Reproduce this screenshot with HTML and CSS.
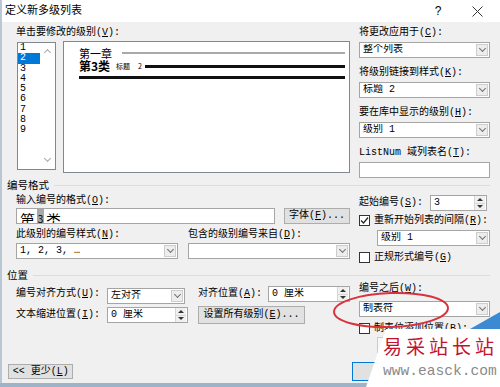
FILE: index.html
```html
<!DOCTYPE html>
<html lang="zh-CN">
<head>
    <meta charset="UTF-8">
    <title>定义新多级列表</title>
    <link rel="stylesheet" href="styles.css">
</head>
<body>
    <div class="dialog">
        <!-- 标题栏 -->
        <div class="titlebar">
            <span class="title">定义新多级列表</span>
            <span class="help">?</span>
            <span class="close"><svg width="11" height="11" viewBox="0 0 11 11"><path d="M0.5 0.5L10.5 10.5M10.5 0.5L0.5 10.5" stroke="#333" stroke-width="1"/></svg></span>
        </div>

        <div class="main">
            <!-- 级别 + 预览 -->
            <div class="sec top">
                <div class="col-left">
                    <div class="lbl">单击要修改的级别(<u>V</u>):</div>
                    <div class="levels-row">
                        <div class="levels">
                            <ul>
                                <li>1</li>
                                <li class="sel">2</li>
                                <li>3</li>
                                <li>4</li>
                                <li>5</li>
                                <li>6</li>
                                <li>7</li>
                                <li>8</li>
                                <li>9</li>
                            </ul>
                            <div class="vscroll"><i class="up"></i><i class="down"></i></div>
                        </div>
                        <div class="preview">
                            <div class="pv-row r1"><span>第一章</span><b class="ln gray"></b></div>
                            <div class="pv-row r2"><span class="bold">第3类</span><span class="tiny">标题</span><span class="tiny n">2</span><b class="ln black"></b></div>
                            <b class="ln black full"></b>
                            <div class="pv-lines">
                                <b class="ln gray"></b>
                                <b class="ln gray"></b>
                                <b class="ln gray"></b>
                                <b class="ln gray"></b>
                                <b class="ln gray"></b>
                                <b class="ln gray"></b>
                                <b class="ln gray"></b>
                            </div>
                        </div>
                    </div>
                </div>
                <div class="side">
                    <div class="lbl">将更改应用于(<u>C</u>):</div>
                    <div class="combo"><span class="val">整个列表</span><span class="dd"></span></div>
                    <div class="lbl gap">将级别链接到样式(<u>K</u>):</div>
                    <div class="combo"><span class="val">标题 2</span><span class="dd"></span></div>
                    <div class="lbl gap">要在库中显示的级别(<u>H</u>):</div>
                    <div class="combo"><span class="val">级别 1</span><span class="dd"></span></div>
                    <div class="lbl gap">ListNum 域列表名(<u>T</u>):</div>
                    <div class="field"></div>
                </div>
            </div>

            <!-- 编号格式 -->
            <div class="grp">编号格式</div>
            <div class="sec fmt">
                <div class="col-left">
                    <div class="lbl">输入编号的格式(<u>O</u>):</div>
                    <div class="row r-fmt">
                        <div class="field fmtin"><span>第</span><span class="fld">3</span><span>类</span>.</div>
                        <div class="btn font-btn">字体(<u>F</u>)...</div>
                    </div>
                    <div class="row r-lbls">
                        <span class="lbl w172">此级别的编号样式(<u>N</u>):</span>
                        <span class="lbl">包含的级别编号来自(<u>D</u>):</span>
                    </div>
                    <div class="row r-sel">
                        <div class="combo w162"><span class="val">1, 2, 3, …</span><span class="dd"></span></div>
                        <div class="combo w162 ml10"><span class="val"></span><span class="dd"></span></div>
                    </div>
                </div>
                <div class="side">
                    <div class="row r-start">
                        <span class="lbl w71">起始编号(<u>S</u>):</span>
                        <div class="spin w57"><span class="val">3</span><span class="ud"><i class="u"></i><i class="d"></i></span></div>
                    </div>
                    <div class="chk r-restart">
                        <span class="cb"><svg width="9" height="9" viewBox="0 0 9 9"><path d="M1 4.5L3.5 7L8 1.5" fill="none" stroke="#222" stroke-width="1.2"/></svg></span>
                        <span class="lbl">重新开始列表的间隔(<u>R</u>):</span>
                    </div>
                    <div class="combo sub"><span class="val">级别 1</span><span class="dd"></span></div>
                    <div class="chk r-legal">
                        <span class="cb"></span>
                        <span class="lbl">正规形式编号(<u>G</u>)</span>
                    </div>
                </div>
            </div>

            <!-- 位置 -->
            <div class="grp pos-grp">位置</div>
            <div class="sec pos">
                <div class="col-left">
                    <div class="row pr1">
                        <span class="lbl w91">编号对齐方式(<u>U</u>):</span>
                        <div class="combo w78"><span class="val">左对齐</span><span class="dd"></span></div>
                        <span class="lbl w70 ml13">对齐位置(<u>A</u>):</span>
                        <div class="spin w82"><span class="val">0 厘米</span><span class="ud"><i class="u"></i><i class="d"></i></span></div>
                    </div>
                    <div class="row pr2">
                        <span class="lbl w91">文本缩进位置(<u>I</u>):</span>
                        <div class="spin w81"><span class="val">0 厘米</span><span class="ud"><i class="u"></i><i class="d"></i></span></div>
                        <div class="btn all-btn">设置所有级别(<u>E</u>)...</div>
                    </div>
                </div>
                <div class="side">
                    <div class="lbl after-lbl">编号之后(<u>W</u>):</div>
                    <div class="combo after-sel"><span class="val">制表符</span><span class="dd"></span></div>
                    <div class="chk r-tab">
                        <span class="cb"></span>
                        <span class="lbl">制表位添加位置(<u>B</u>):</span>
                    </div>
                    <div class="field sub dis"></div>
                </div>
            </div>

            <!-- 底部按钮（确定、取消被水印盖住） -->
            <div class="footer">
                <div class="btn less-btn">&lt;&lt; 更少(<u>L</u>)</div>
                <div class="btn ok-btn"></div>
                <div class="btn cancel-btn"></div>
            </div>
        </div>
    </div>

    <!-- 红圈标注 -->
    <svg class="mark" width="124" height="44" viewBox="0 0 124 44">
        <ellipse cx="62" cy="21" rx="57" ry="17" fill="none" stroke="#d8333c" stroke-width="2" transform="rotate(-2 62 21)"/>
    </svg>

    <!-- 水印 -->
    <div class="wm-tri"></div>
    <div class="wm">
        <div class="wm-cn">易采站长站</div>
        <div class="wm-en">www.easck.com</div>
    </div>
</body>
</html>
```

FILE: styles.css
```css
*{
    margin: 0;
    padding: 0;
    box-sizing: border-box;
}
body{
    width: 500px;
    height: 387px;
    position: relative;
    overflow: hidden;
    background-color: #9fb3c8;
    font-family: "Liberation Mono", "Noto Sans CJK SC", monospace;
    font-size: 10px;
    line-height: 12px;
    color: #000;
}
u{
    text-underline-offset: 1px;
}

/* 对话框 */
.dialog{
    width: 500px;
    height: 383px;
    background-color: #f0f0f0;
    border-left: 2px solid #b9c6d3;
}
.titlebar{
    height: 22px;
    background-color: #fff;
    display: flex;
    align-items: center;
    padding-left: 3px;
}
.title{
    flex: 1;
    font-size: 11px;
}
.help{
    width: 10px;
    text-align: center;
    font-family: "Liberation Sans", sans-serif;
    font-size: 12px;
}
.close{
    display: flex;
    margin-left: 29px;
    margin-right: 17px;
}

.main{
    padding: 0 10px 0 14px;
}
.sec{
    display: flex;
}
.col-left{
    width: 334px;
}
.side{
    width: 131px;
    margin-left: 9px;
}
.row{
    display: flex;
    align-items: center;
}
.lbl{
    display: block;
    height: 12px;
    line-height: 12px;
    white-space: nowrap;
}

/* 顶部 */
.top{
    margin-top: 5px;
}
.levels-row{
    display: flex;
    margin-top: 2px;
}
.levels{
    width: 39px;
    height: 128px;
    margin: 1px 0 0 1px;
    border: 1px solid #828790;
    background-color: #fff;
    display: flex;
}
.levels ul{
    list-style: none;
    width: 22px;
}
.levels li{
    height: 10.25px;
    line-height: 10.25px;
    padding-left: 2px;
    font-size: 10px;
}
.levels li.sel{
    background-color: #0078d7;
    color: #fff;
}
.vscroll{
    flex: 1;
    display: flex;
    flex-direction: column;
    justify-content: space-between;
    align-items: center;
    padding: 7px 0 8px;
}
.vscroll i{
    width: 5px;
    height: 5px;
    border-left: 1px solid #a8a8a8;
    border-top: 1px solid #a8a8a8;
    transform: rotate(45deg);
}
.vscroll i.down{
    transform: rotate(225deg);
}

/* 预览 */
.preview{
    width: 287px;
    height: 132px;
    margin-left: 7px;
    border: 1px solid #828790;
    background-color: #fff;
    padding: 5px 4px 0 15px;
    font-family: "Noto Sans CJK SC", sans-serif;
}
.pv-row{
    display: flex;
    align-items: center;
}
.pv-row.r1{
    height: 12px;
    font-size: 11px;
}
.pv-row.r1 .ln{
    margin-left: 10px;
}
.pv-row.r2{
    height: 14px;
}
.bold{
    font-weight: bold;
    font-size: 12px;
}
.tiny{
    font-size: 7px;
    margin-left: 6px;
}
.tiny.n{
    margin-left: 8px;
}
.pv-row.r2 .ln{
    margin-left: 3px;
}
.ln{
    display: block;
    flex: 1;
}
.ln.gray{
    height: 2px;
    background-color: #a9a9a9;
}
.ln.black{
    height: 3px;
    background-color: #111;
}
.ln.full{
    margin-top: 3px;
}
.pv-lines{
    margin: 8px 0 0 8px;
    display: flex;
    flex-direction: column;
    gap: 9.33px;
}

/* 下拉框、输入框 */
.combo,
.field,
.spin{
    height: 16px;
    border: 1px solid #a5a5a5;
    background-color: #fff;
    display: flex;
    align-items: center;
}
.lbl + .combo,
.lbl + .field{
    margin-top: 3px;
}
.lbl.gap{
    margin-top: 9px;
}
.combo .val,
.spin .val{
    flex: 1;
    padding-left: 3px;
    white-space: nowrap;
    overflow: hidden;
}
.combo .dd{
    width: 12px;
    height: 12px;
    margin-right: 1px;
    border: 1px solid #cdcdcd;
    background-color: #ededed;
    display: flex;
    justify-content: center;
    align-items: center;
}
.combo .dd::after{
    content: "";
    width: 4px;
    height: 4px;
    margin-top: -3px;
    border-right: 1px solid #707070;
    border-bottom: 1px solid #707070;
    transform: rotate(45deg);
}
.spin .ud{
    width: 11px;
    height: 14px;
    margin-right: 1px;
    display: flex;
    flex-direction: column;
    background-color: #f0f0f0;
    border-left: 1px solid #d6d6d6;
}
.spin .ud i{
    flex: 1;
    display: flex;
    justify-content: center;
    align-items: center;
}
.spin .ud i.u{
    border-bottom: 1px solid #d6d6d6;
}
.spin .ud i.u::after{
    content: "";
    border-left: 3px solid transparent;
    border-right: 3px solid transparent;
    border-bottom: 3px solid #333;
}
.spin .ud i.d::after{
    content: "";
    border-left: 3px solid transparent;
    border-right: 3px solid transparent;
    border-top: 3px solid #333;
}
.field.dis{
    border-color: #cccccc;
    background-color: #f7f7f7;
}

/* 按钮 */
.btn{
    height: 16px;
    border: 1px solid #adadad;
    background-color: #e1e1e1;
    display: flex;
    align-items: center;
    justify-content: center;
    white-space: nowrap;
}

/* 复选框 */
.chk{
    display: flex;
    align-items: center;
    height: 13px;
}
.cb{
    width: 11px;
    height: 11px;
    border: 1px solid #333;
    background-color: #fff;
    margin-right: 4px;
    display: flex;
    align-items: center;
    justify-content: center;
}

/* 分组标题 */
.grp{
    display: flex;
    align-items: center;
    height: 12px;
    margin: 1px 0 0 -9px;
    font-family: "Noto Sans CJK SC", sans-serif;
    font-size: 10.5px;
}
.grp::after{
    content: "";
    flex: 1;
    height: 1px;
    margin-left: 5px;
    background-color: #dcdcdc;
}
.pos-grp{
    margin-top: 5px;
}

/* 编号格式 */
.fmt .col-left > .lbl{
    margin-top: 4px;
}
.r-fmt{
    margin-top: 1px;
}
.fmtin{
    width: 259px;
    overflow: hidden;
    align-items: flex-start;
    padding: 3px 0 0 3px;
    font-family: "Noto Sans CJK SC", sans-serif;
    font-size: 15px;
    line-height: 15px;
}
.fld{
    display: inline-block;
    width: 7px;
    height: 16px;
    margin: -4px 2px 0;
    background-color: #a8a8a8;
    font-size: 10px;
    line-height: 22px;
    text-align: center;
}
.font-btn{
    width: 66px;
    margin-left: 9px;
}
.r-lbls{
    margin-top: 5px;
}
.w172{
    width: 172px;
}
.r-sel{
    margin-top: 2px;
}
.w162{
    width: 162px;
}
.ml10{
    margin-left: 10px;
}
.r-start{
    margin-top: 4px;
}
.w71{
    width: 71px;
}
.w57{
    width: 57px;
}
.r-restart{
    margin-top: 3px;
}
.sub{
    width: 113px;
    margin-left: 18px;
}
.fmt .combo.sub{
    margin-top: 3px;
}
.r-legal{
    margin-top: 5px;
}

/* 位置 */
.pr1{
    height: 16px;
    margin-top: 5px;
}
.pr2{
    height: 18px;
    margin-top: 4px;
}
.w91{
    width: 91px;
}
.w78{
    width: 78px;
}
.w70{
    width: 70px;
}
.ml13{
    margin-left: 13px;
}
.w82{
    width: 82px;
}
.w81{
    width: 81px;
}
.all-btn{
    width: 107px;
    height: 18px;
    margin-left: 10px;
}
.after-lbl{
    margin-top: 2px;
}
.after-sel{
    margin-top: 6px !important;
}
.r-tab{
    margin-top: 5px;
}
.field.sub{
    margin-top: 2px;
}

/* 底部 */
.footer{
    display: flex;
    align-items: center;
    margin: 9px 0 0 -8px;
}
.less-btn{
    width: 66px;
    height: 15px;
}
.ok-btn{
    width: 70px;
    height: 19px;
    margin-left: 279px;
    border: 1px solid #0078d7;
}
.cancel-btn{
    width: 62px;
    height: 19px;
    margin-left: 7px;
}

/* 标注和水印 */
.mark{
    position: absolute;
    left: 329px;
    top: 289px;
}
.wm-tri{
    position: absolute;
    left: 470px;
    top: 312px;
    width: 30px;
    height: 28px;
    background-color: #3b8ad2;
    clip-path: polygon(0 17px, 100% 0, 100% 100%);
}
.wm{
    position: absolute;
    left: 366px;
    top: 329px;
    width: 134px;
    height: 58px;
    background-color: #fff;
    clip-path: polygon(20px 0, 100% 0, 100% 100%, 0 100%);
    padding: 7px 0 0 17px;
}
.wm-cn{
    font-family: "Noto Sans CJK SC", sans-serif;
    font-size: 19px;
    line-height: 20px;
    letter-spacing: 4px;
    color: #c3122f;
}
.wm-en{
    margin-top: 8px;
    font-family: "Liberation Mono", monospace;
    font-size: 14.6px;
    line-height: 14px;
    color: #8a8a8a;
}
```
